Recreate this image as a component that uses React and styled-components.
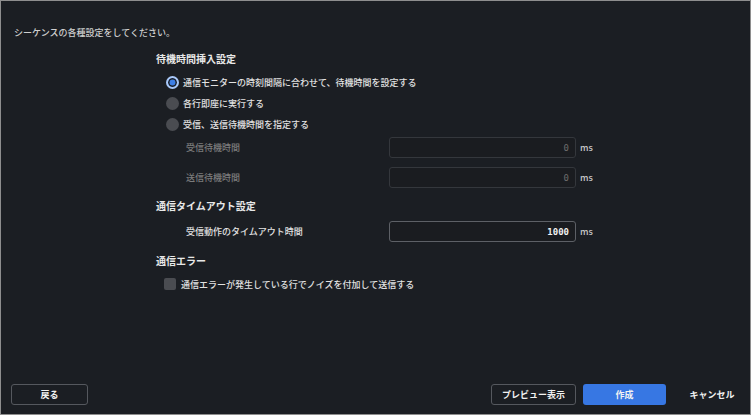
import React, { useState } from 'react';
import styled, { createGlobalStyle } from 'styled-components';

const GlobalStyle = createGlobalStyle`
  html, body {
    margin: 0;
    padding: 0;
    background: #1b1e23;
  }
  * {
    box-sizing: border-box;
  }
`;

const Window = styled.div`
  width: 751px;
  height: 415px;
  border: 1px solid #8e8e8e;
  background-color: #1b1e23;
  display: flex;
  flex-direction: column;
  font-family: 'Noto Sans CJK JP', 'Noto Sans', sans-serif;
  color: #e2e2e2;
  font-size: 9px;
  font-weight: 500;
`;

const Intro = styled.p`
  margin: 26px 0 0 13px;
  line-height: 12px;
  color: #cfcfcf;
`;

const Form = styled.div`
  margin-left: 155px;
  flex: 1;
`;

const SectionTitle = styled.h3`
  margin: ${(p) => p.$top}px 0 0 0;
  font-size: 10px;
  font-weight: 700;
  line-height: 14px;
  color: #e8e8e8;
`;

const OptionList = styled.div`
  margin-top: 6px;
  padding-left: 10px;
  display: flex;
  flex-direction: column;
`;

const OptionRow = styled.label`
  height: 21px;
  display: flex;
  align-items: center;
  gap: 4px;
  cursor: pointer;
`;

const RadioDot = styled.span`
  width: 13px;
  height: 13px;
  border-radius: 50%;
  flex-shrink: 0;
  background: ${(p) => (p.$checked ? '#3d7fe6' : '#4a4c51')};
  border: ${(p) => (p.$checked ? '2px solid #a9c8f7' : 'none')};
  box-shadow: ${(p) => (p.$checked ? 'inset 0 0 0 1.5px #1b1e23' : 'none')};
`;

const FieldList = styled.div`
  margin-top: ${(p) => p.$top}px;
  padding-left: 30px;
  display: flex;
  flex-direction: column;
  gap: 9px;
`;

const FieldRow = styled.div`
  display: grid;
  grid-template-columns: 203px 187px auto;
  align-items: center;
  height: 21px;
  color: ${(p) => (p.$disabled ? '#7c7c7c' : '#e2e2e2')};
`;

const NumberBox = styled.div`
  height: 21px;
  border-radius: 3px;
  border: 1px solid ${(p) => (p.$disabled ? '#34373c' : '#5d6066')};
  background: #1a1c20;
  display: flex;
  align-items: center;
  justify-content: flex-end;
  padding-right: 6px;
  font-family: 'DejaVu Sans Mono', 'Liberation Mono', monospace;
  font-size: 9px;
  color: ${(p) => (p.$disabled ? '#6d6d6d' : '#f2f2f2')};
  font-weight: ${(p) => (p.$disabled ? 400 : 700)};
`;

const Unit = styled.span`
  margin-left: 4px;
  color: #c8c8c8;
`;

const CheckRow = styled.label`
  margin-top: 8px;
  padding-left: 8px;
  height: 16px;
  display: flex;
  align-items: center;
  gap: 5px;
`;

const CheckBox = styled.span`
  width: 12px;
  height: 12px;
  border-radius: 2px;
  background: #4a4c51;
`;

const Footer = styled.div`
  display: flex;
  align-items: center;
  padding: 0 0 9px 10px;
`;

const Button = styled.button`
  height: 21px;
  width: ${(p) => p.$w}px;
  margin-left: ${(p) => p.$ml || 0}px;
  border-radius: 3px;
  font-family: 'Noto Sans CJK JP', 'Noto Sans', sans-serif;
  font-size: 9px;
  font-weight: 700;
  color: #f2f2f2;
  cursor: pointer;
  border: ${(p) => (p.$variant === 'outline' ? '1.5px solid #55585e' : 'none')};
  background: ${(p) => (p.$variant === 'primary' ? '#3777e3' : 'transparent')};
`;

const Spacer = styled.div`
  flex: 1;
`;

const options = [
  '通信モニターの時刻間隔に合わせて、待機時間を設定する',
  '各行即座に実行する',
  '受信、送信待機時間を指定する',
];

const App = () => {
  const [mode, setMode] = useState(0);
  return (
    <>
      <GlobalStyle />
      <Window>
        <Intro>シーケンスの各種設定をしてください。</Intro>
        <Form>
          <SectionTitle $top={13}>待機時間挿入設定</SectionTitle>
          <OptionList>
            {options.map((text, i) => (
              <OptionRow key={text} onClick={() => setMode(i)}>
                <RadioDot $checked={mode === i} />
                <span>{text}</span>
              </OptionRow>
            ))}
          </OptionList>
          <FieldList $top={2}>
            <FieldRow $disabled>
              <span>受信待機時間</span>
              <NumberBox $disabled>0</NumberBox>
              <Unit>ms</Unit>
            </FieldRow>
            <FieldRow $disabled>
              <span>送信待機時間</span>
              <NumberBox $disabled>0</NumberBox>
              <Unit>ms</Unit>
            </FieldRow>
          </FieldList>
          <SectionTitle $top={11}>通信タイムアウト設定</SectionTitle>
          <FieldList $top={8}>
            <FieldRow>
              <span>受信動作のタイムアウト時間</span>
              <NumberBox>1000</NumberBox>
              <Unit>ms</Unit>
            </FieldRow>
          </FieldList>
          <SectionTitle $top={12}>通信エラー</SectionTitle>
          <CheckRow>
            <CheckBox />
            <span>通信エラーが発生している行でノイズを付加して送信する</span>
          </CheckRow>
        </Form>
        <Footer>
          <Button $variant="outline" $w={77}>戻る</Button>
          <Spacer />
          <Button $variant="outline" $w={85}>プレビュー表示</Button>
          <Button $variant="primary" $w={83} $ml={7}>作成</Button>
          <Button $w={76} $ml={8}>キャンセル</Button>
        </Footer>
      </Window>
    </>
  );
};

export default App;
